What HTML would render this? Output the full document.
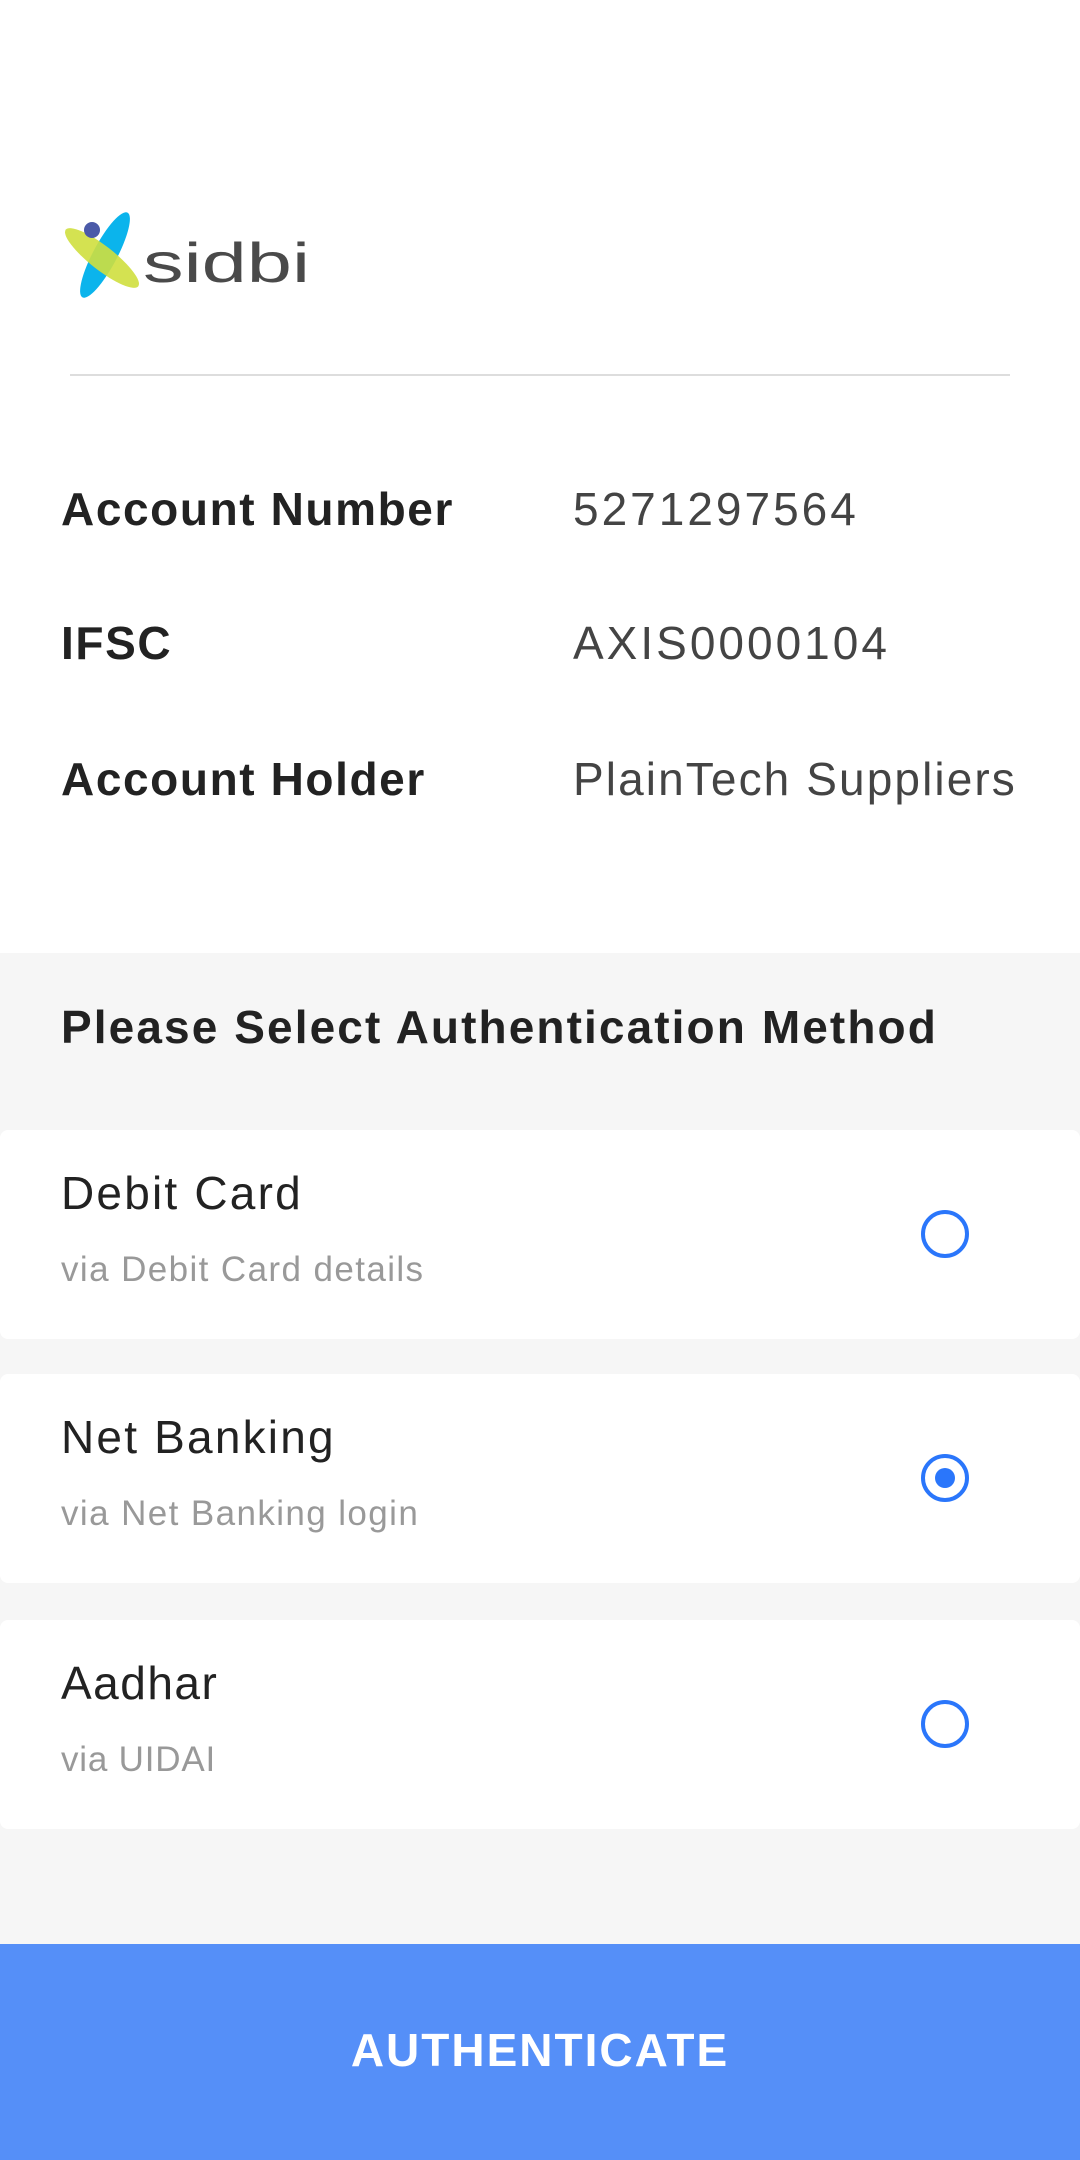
<!DOCTYPE html>
<html><head><meta charset="utf-8"><style>
*{margin:0;padding:0;box-sizing:border-box}
body{width:1080px;height:2160px;background:#fff;font-family:"Liberation Sans",sans-serif;position:relative;overflow:hidden}
.a{position:absolute;white-space:nowrap;line-height:1}
.lbl{left:61px;font-weight:bold;font-size:46px;color:#222;letter-spacing:1.6px}
.val{left:573px;font-size:46px;color:#444;letter-spacing:3px}
.gray{position:absolute;left:0;top:953px;width:1080px;height:991px;background:#f6f6f6}
.card{position:absolute;left:0;width:1080px;height:209px;background:#fff;border-radius:8px}
.t{position:absolute;left:61px;top:36px;font-size:46px;color:#222;letter-spacing:2.2px}
.s{position:absolute;left:61px;top:120px;font-size:35px;color:#999;letter-spacing:1.4px}
.r{position:absolute;left:921px;top:80px;width:48px;height:48px;border:4px solid #2a76fb;border-radius:50%}
.r.on::after{content:"";position:absolute;left:10px;top:10px;width:20px;height:20px;border-radius:50%;background:#2a76fb}
.btn{position:absolute;left:0;top:1944px;width:1080px;height:216px;background:#558ff8;color:#fff;font-weight:bold;font-size:46px;letter-spacing:2px;text-align:center;line-height:212px}
</style></head><body>
<svg class="a" style="left:60px;top:200px" width="260" height="110" viewBox="60 200 260 110">
<ellipse cx="105" cy="255" rx="12" ry="48" transform="rotate(28 105 255)" fill="#0bb4ec"/>
<ellipse cx="102" cy="258" rx="46" ry="12" transform="rotate(38 102 258)" fill="#cfdf3e" opacity="0.9"/>
<circle cx="92" cy="230" r="8" fill="#4b5aa8"/>
<text x="143" y="282" font-family="Liberation Sans" font-size="56" fill="#4a4a4a" textLength="167" lengthAdjust="spacingAndGlyphs">sidbi</text>
</svg>
<div class="a" style="left:70px;top:374px;width:940px;height:2px;background:#ddd"></div>
<div class="a lbl" style="top:486px">Account Number</div>
<div class="a val" style="top:486px">5271297564</div>
<div class="a lbl" style="top:620px">IFSC</div>
<div class="a val" style="top:620px">AXIS0000104</div>
<div class="a lbl" style="top:756px">Account Holder</div>
<div class="a val" style="top:756px;letter-spacing:2.1px">PlainTech Suppliers</div>
<div class="gray"></div>
<div class="a" style="left:61px;top:1004px;font-weight:bold;font-size:46px;color:#222;letter-spacing:2.1px">Please Select Authentication Method</div>
<div class="card" style="top:1130px"><div class="t">Debit Card</div><div class="s">via Debit Card details</div><div class="r"></div></div>
<div class="card" style="top:1374px"><div class="t">Net Banking</div><div class="s">via Net Banking login</div><div class="r on"></div></div>
<div class="card" style="top:1620px"><div class="t" style="letter-spacing:1.5px">Aadhar</div><div class="s" style="letter-spacing:0.8px">via UIDAI</div><div class="r"></div></div>
<div class="btn">AUTHENTICATE</div>
</body></html>
